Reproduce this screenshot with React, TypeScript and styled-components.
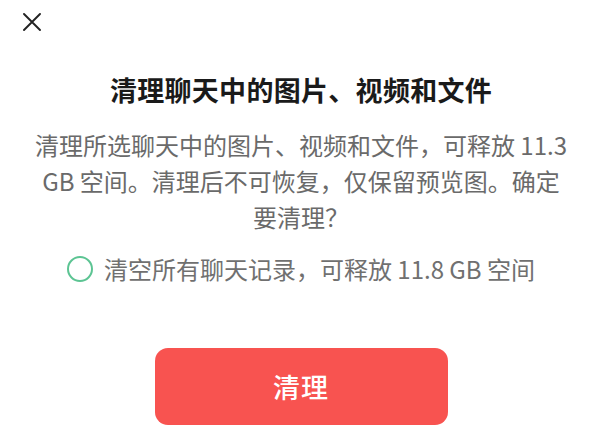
import React from "react";
import styled, { createGlobalStyle } from "styled-components";

const Global = createGlobalStyle`
  html, body { margin: 0; padding: 0; background: #ffffff; }
  body { font-family: "Noto Sans CJK SC", "Noto Sans", sans-serif; }
`;

const Page = styled.div`
  width: 612px;
  height: 439px;
  box-sizing: border-box;
  padding: 13px 10px 0 0;
  display: flex;
  flex-direction: column;
  align-items: center;
  background: #fff;
  overflow: hidden;
`;

const TopBar = styled.div`
  align-self: stretch;
  display: flex;
  padding-left: 23px;
  height: 18px;
`;

const CloseButton = styled.button`
  border: none;
  background: none;
  padding: 0;
  width: 18px;
  height: 18px;
  display: flex;
  cursor: pointer;
`;

const Title = styled.h1`
  margin: 39px 0 0 0;
  font-size: 27px;
  line-height: 40px;
  font-weight: 700;
  color: #1a1a1a;
  letter-spacing: 0.3px;
  text-align: center;
`;

const Body = styled.p`
  margin: 17px 0 0 0;
  width: 540px;
  font-size: 24px;
  line-height: 36px;
  color: #6a6a6a;
  text-align: center;
`;

const OptionRow = styled.label`
  margin-top: 16px;
  display: flex;
  align-items: center;
  gap: 11px;
  font-size: 24px;
  line-height: 36px;
  color: #707070;
  cursor: pointer;
`;

const Radio = styled.span`
  width: 22px;
  height: 22px;
  border-radius: 50%;
  border: 2px solid #5cc493;
  flex-shrink: 0;
`;

const PrimaryButton = styled.button`
  margin-top: 61px;
  width: 293px;
  height: 77px;
  box-sizing: border-box;
  border: none;
  border-radius: 13px;
  background: #f85350;
  color: #ffffff;
  font-family: "Noto Sans CJK SC", "Noto Sans", sans-serif;
  font-size: 27px;
  font-weight: 500;
  letter-spacing: 1px;
  cursor: pointer;
  flex-shrink: 0;
`;

export default function App() {
  return (
    <>
      <Global />
      <Page>
        <TopBar>
          <CloseButton aria-label="关闭">
            <svg width="18" height="18" viewBox="0 0 18 18">
              <path d="M1 1 L17 17 M17 1 L1 17" stroke="#222" strokeWidth="1.9" strokeLinecap="round" />
            </svg>
          </CloseButton>
        </TopBar>
        <Title>清理聊天中的图片、视频和文件</Title>
        <Body>
          清理所选聊天中的图片、视频和文件，可释放 11.3 GB 空间。清理后不可恢复，仅保留预览图。确定要清理？
        </Body>
        <OptionRow>
          <Radio />
          清空所有聊天记录，可释放 11.8 GB 空间
        </OptionRow>
        <PrimaryButton>清理</PrimaryButton>
      </Page>
    </>
  );
}
